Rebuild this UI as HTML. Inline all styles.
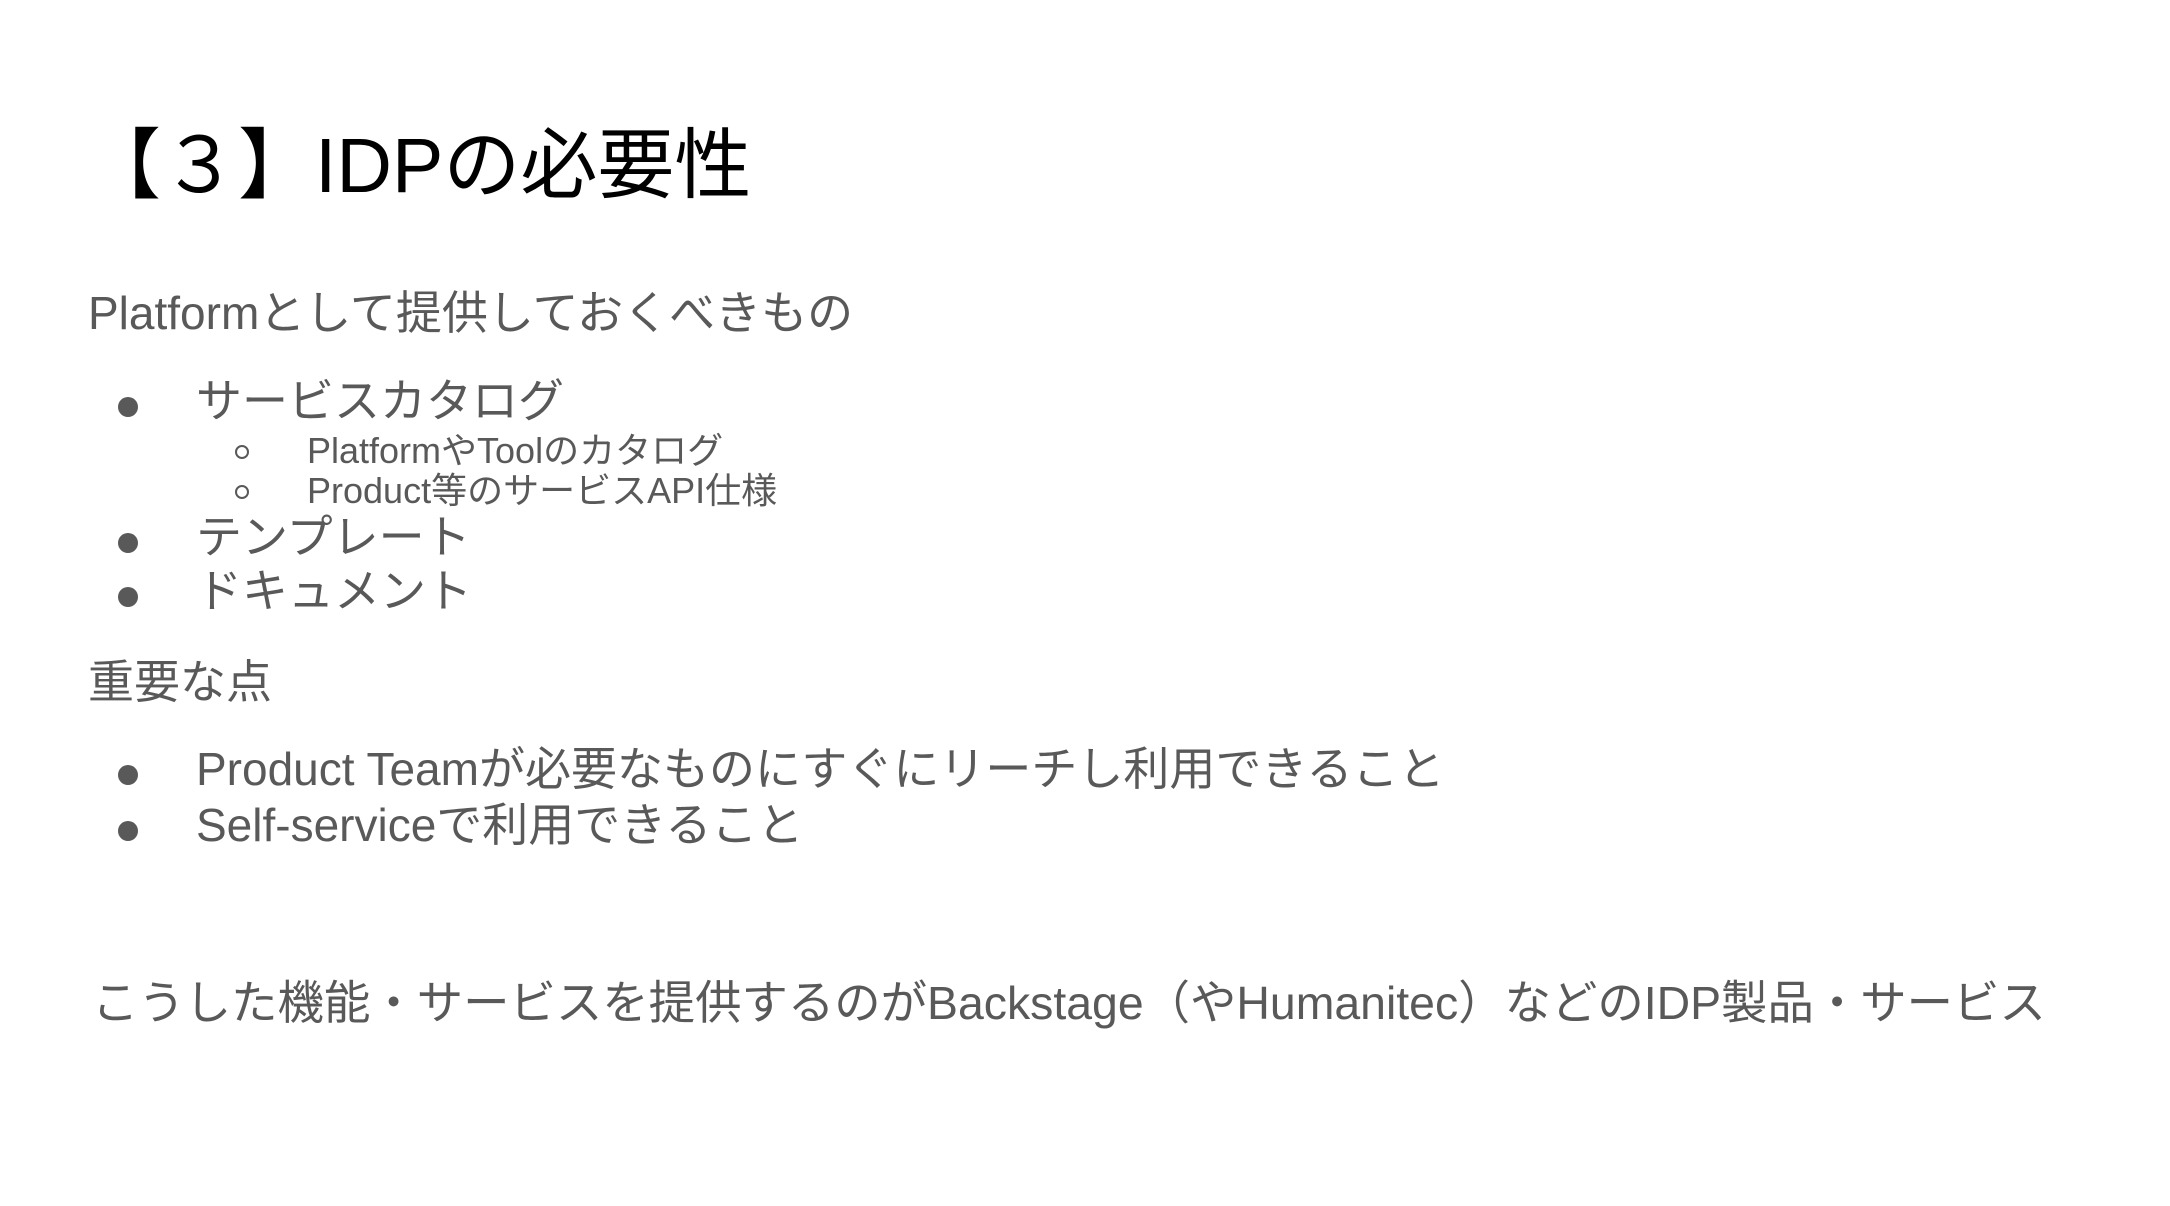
<!DOCTYPE html>
<html><head><meta charset="utf-8"><style>
html,body{margin:0;padding:0;background:#fff;}
body{width:2170px;height:1206px;position:relative;overflow:hidden;font-family:"Liberation Sans","Noto Sans CJK JP",sans-serif;color:#595959;}
.t{position:absolute;white-space:nowrap;}
.b{font-size:46px;line-height:46px;}
.s{font-size:36px;line-height:36px;}
.dot{position:absolute;width:20px;height:20px;border-radius:50%;background:#595959;}
.circ{position:absolute;width:14px;height:14px;border-radius:50%;border:2px solid #595959;box-sizing:border-box;}
</style></head><body>
<div class="t" style="left:84px;top:128px;font-size:77px;line-height:77px;color:#000;">【３】IDPの必要性</div>

<div class="t b" style="left:88px;top:290px;">Platformとして提供しておくべきもの</div>

<div class="dot" style="left:118px;top:397px;"></div>
<div class="t b" style="left:196px;top:378px;">サービスカタログ</div>
<div class="circ" style="left:235px;top:445px;"></div>
<div class="t s" style="left:307px;top:433px;">PlatformやToolのカタログ</div>
<div class="circ" style="left:235px;top:485px;"></div>
<div class="t s" style="left:307px;top:473px;">Product等のサービスAPI仕様</div>
<div class="dot" style="left:118px;top:533px;"></div>
<div class="t b" style="left:196px;top:514px;">テンプレート</div>
<div class="dot" style="left:118px;top:587px;"></div>
<div class="t b" style="left:196px;top:568px;">ドキュメント</div>

<div class="t b" style="left:88px;top:659px;">重要な点</div>

<div class="dot" style="left:118px;top:765px;"></div>
<div class="t b" style="left:196px;top:746px;">Product Teamが必要なものにすぐにリーチし利用できること</div>
<div class="dot" style="left:118px;top:821px;"></div>
<div class="t b" style="left:196px;top:802px;">Self-serviceで利用できること</div>

<div class="t" style="left:92px;top:980px;font-size:46.4px;line-height:46px;">こうした機能・サービスを提供するのがBackstage（やHumanitec）などのIDP製品・サービス</div>
</body></html>
